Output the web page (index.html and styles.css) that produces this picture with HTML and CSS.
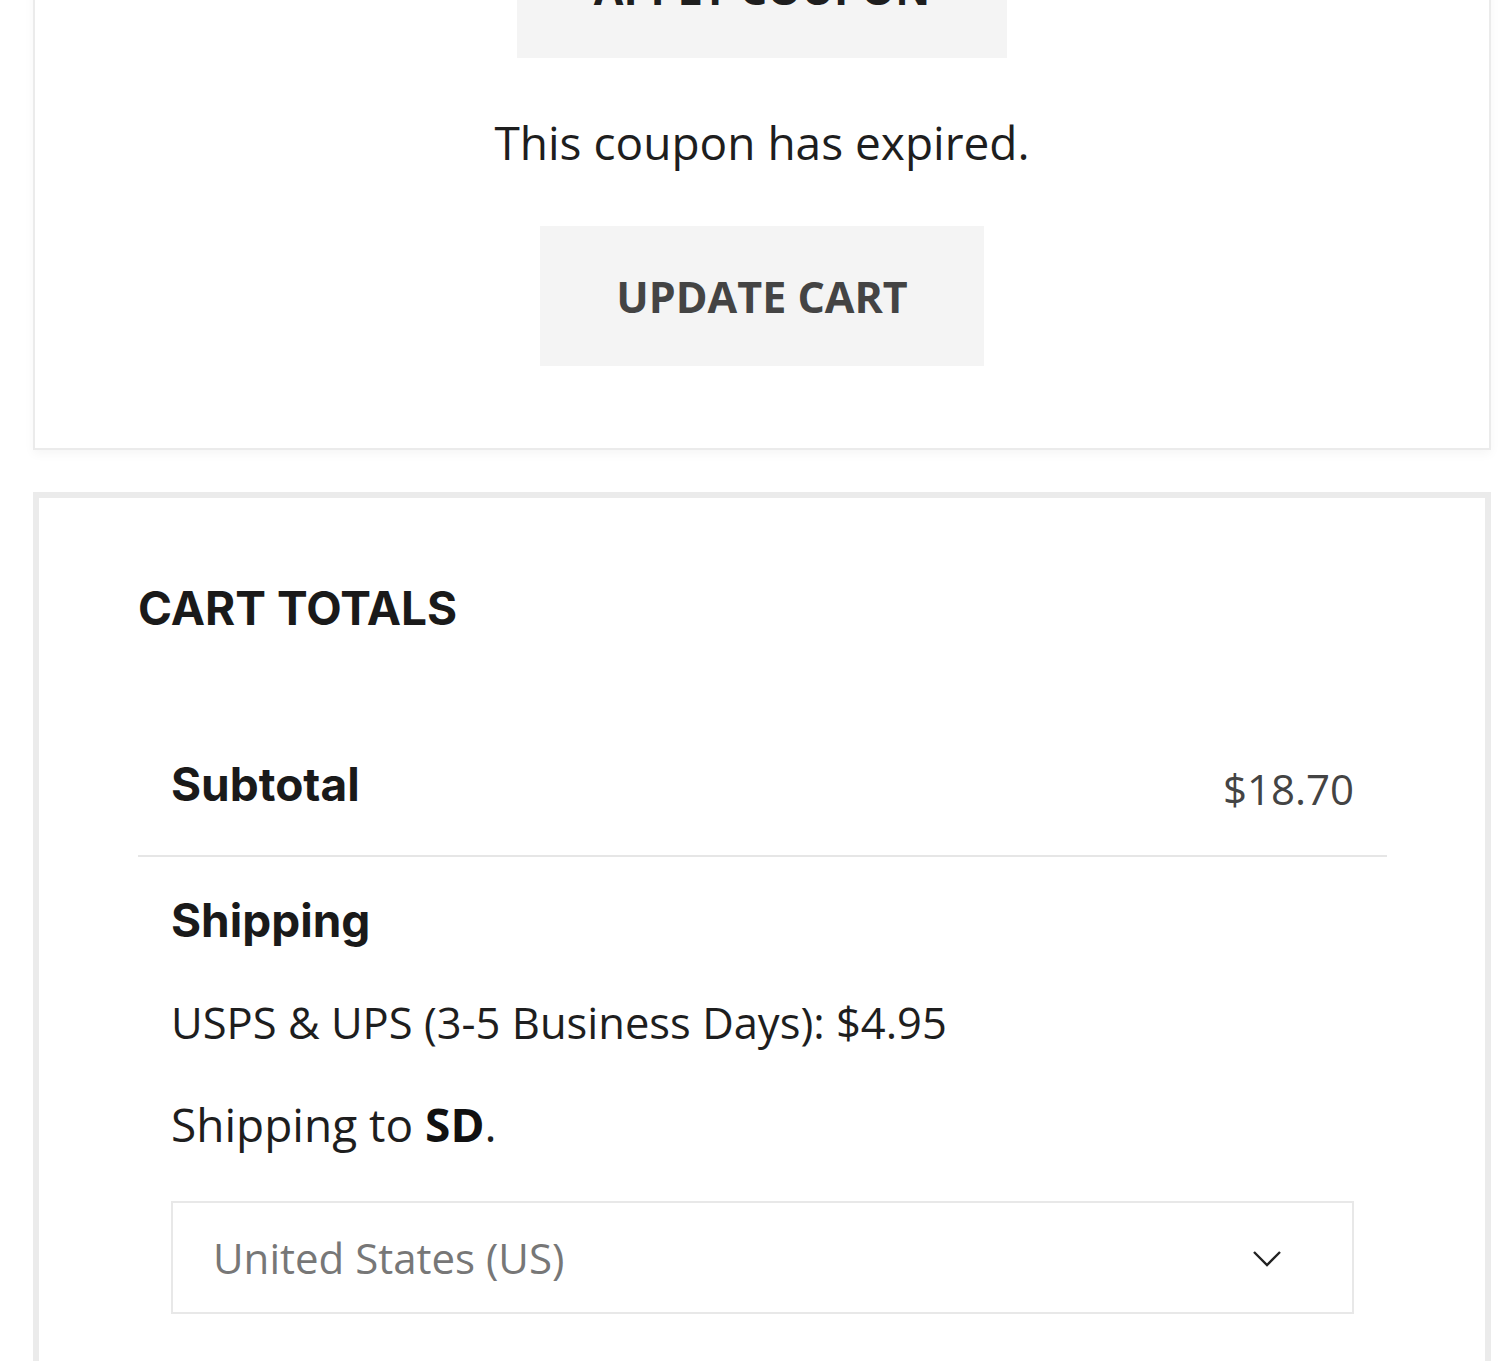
FILE: index.html
```html
<!DOCTYPE html>
<html>
<head>
	<meta charset="UTF-8">
	<title>Cart</title>
	<link rel="stylesheet" href="styles.css">
</head>
<body>
	<div class="cart_page">
		<div class="coupon_box">
			<button type="button" class="cart_btn cart_btn_coupon">APPLY COUPON</button>
			<p class="coupon_msg">This coupon has expired.</p>
			<button type="button" class="cart_btn cart_btn_update">UPDATE CART</button>
		</div>

		<div class="cart_totals">
			<h2 class="totals_title">CART TOTALS</h2>
			<table class="totals_table">
				<tbody>
					<tr class="row_subtotal">
						<th>Subtotal</th>
						<td class="amount">$18.70</td>
					</tr>
					<tr class="row_shipping">
						<td colspan="2">
							<div class="ship_title">Shipping</div>
							<p class="ship_line ship_method">USPS &amp; UPS (3-5 Business Days): $4.95</p>
							<p class="ship_line">Shipping to <strong>SD</strong>.</p>
							<div class="country_select">
								<span class="country_value">United States (US)</span>
								<svg class="select_arrow" width="30" height="20" viewBox="0 0 30 20">
									<polyline points="2,4 15,17 28,4" fill="none" stroke="#222" stroke-width="2.4"/>
								</svg>
							</div>
						</td>
					</tr>
				</tbody>
			</table>
		</div>
	</div>
</body>
</html>
```

FILE: styles.css
```css
body
{
	margin: 0;
	background-color: #fff;
	font-family: "Open Sans", "Liberation Sans", sans-serif;
	color: #1e1e1e;
	overflow: hidden;
}
.cart_page
{
	width: 1458px;
	margin-left: 33px;
}
.coupon_box
{
	margin-top: -84px;
	border: 2px solid #ebebeb;
	box-shadow: 0 4px 10px rgba(0, 0, 0, 0.04);
	display: flex;
	flex-direction: column;
	align-items: center;
	gap: 45px;
	padding-bottom: 82px;
	background-color: #fff;
}
.cart_btn
{
	border: none;
	background-color: #f4f4f4;
	font-family: "Open Sans", "Liberation Sans", sans-serif;
	font-weight: 700;
	font-size: 43px;
	color: #444;
	height: 140px;
	padding: 0;
}
.cart_btn_coupon
{
	width: 490px;
	color: #1e1e1e;
}
.cart_btn_update
{
	width: 444px;
}
.coupon_msg
{
	margin: 0;
	font-size: 46px;
	line-height: 78px;
}

.cart_totals
{
	margin-top: 42px;
	border: 6px solid #ebebeb;
	padding: 82px 98px 0 99px;
	height: 1000px;
}
.totals_title
{
	margin: 0;
	font-family: "Inter", "Noto Sans", sans-serif;
	font-weight: 700;
	font-size: 46px;
	line-height: 56px;
	color: #1a1a1a;
}
.totals_table
{
	width: 100%;
	border-collapse: collapse;
	margin-top: 114px;
}
.totals_table th,
.totals_table td
{
	padding: 0 33px;
	text-align: left;
	vertical-align: top;
}
.row_subtotal th,
.row_subtotal td
{
	padding-bottom: 32px;
	border-bottom: 2px solid #e6e6e6;
}
.row_subtotal th,
.ship_title
{
	font-family: "Inter", "Noto Sans", sans-serif;
	font-weight: 700;
	font-size: 46px;
	line-height: 69px;
	color: #1a1a1a;
}
.totals_table td.amount
{
	text-align: right;
	font-size: 42px;
	line-height: 69px;
	color: #444;
	padding-top: 4px;
}
.row_shipping td
{
	padding-top: 29px;
}
.ship_line
{
	margin: 33px 0 0 0;
	font-size: 46px;
	line-height: 69px;
}
.ship_method
{
	font-size: 43.5px;
}
.ship_line strong
{
	font-weight: 700;
	color: #111;
}
.country_select
{
	margin-top: 42px;
	height: 109px;
	border: 2px solid #e8e8e8;
	display: flex;
	align-items: center;
	justify-content: space-between;
	padding: 0 70px 0 40px;
}
.country_value
{
	font-size: 42px;
	color: #777;
}
```
